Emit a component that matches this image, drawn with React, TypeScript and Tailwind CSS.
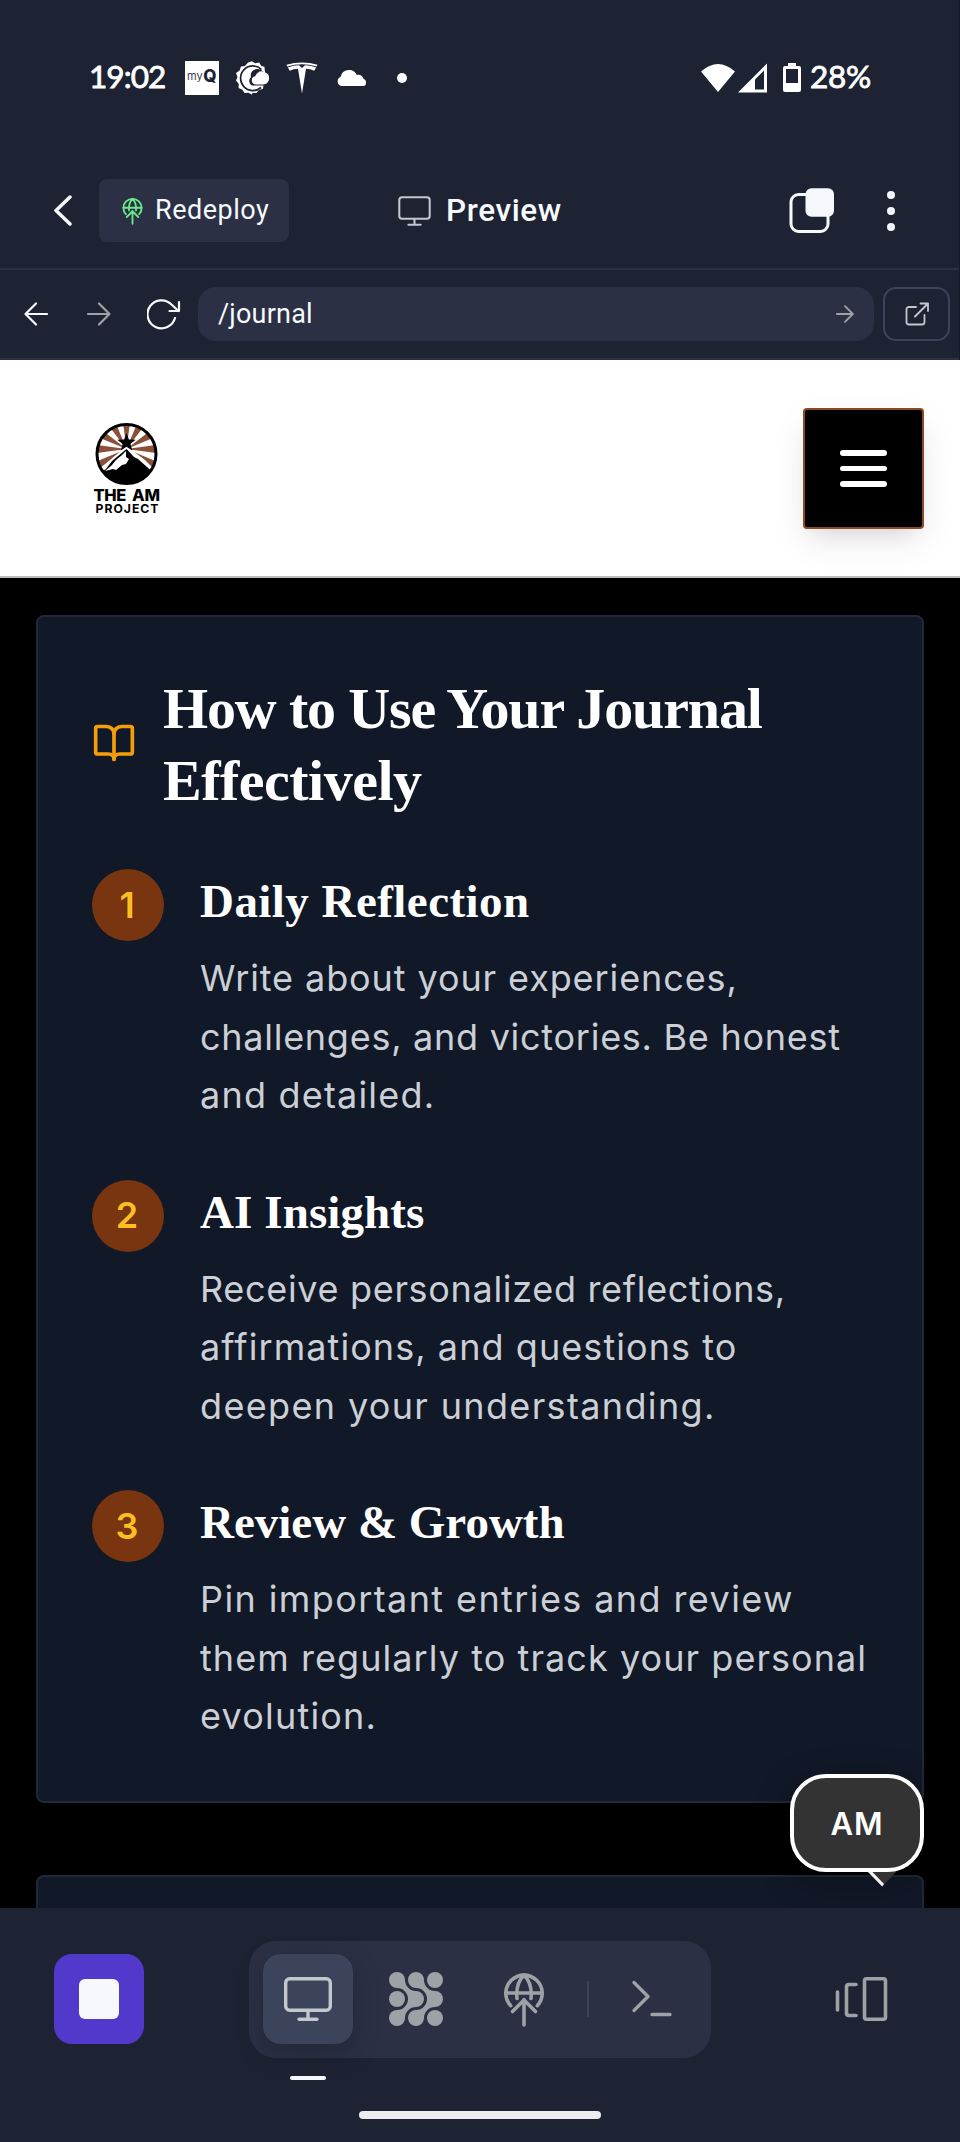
import type { ReactNode } from "react";
import { BookOpen } from "lucide-react";

type IconProps = { box: string; className: string; children: ReactNode };

function Icon({ box, className, children }: IconProps) {
  return (
    <svg
      viewBox={box}
      className={`shrink-0 ${className}`}
      fill="none"
      stroke="currentColor"
      strokeLinecap="round"
      strokeLinejoin="round"
      aria-hidden="true"
    >
      {children}
    </svg>
  );
}

function MonitorIcon({ className, stroke }: { className: string; stroke: number }) {
  return (
    <Icon box="0 0 48 44" className={className}>
      <g strokeWidth={stroke}>
        <rect x="1.7" y="1.7" width="44.6" height="31.6" rx="4" />
        <path d="M24 33.500v8M15 42.200h18" />
      </g>
    </Icon>
  );
}

function DeployIcon({ className, stroke }: { className: string; stroke: number }) {
  return (
    <Icon box="503 1971 42 55" className={className}>
      <g strokeWidth={stroke}>
        <path d="M510.700 2004.700A18.200 18.200 0 1 1 537.300 2004.700" />
        <path d="M506 1992h36M524 1974c-5.500 5.500-8 14-7 23.500M524 1974c5.500 5.500 8 14 7 23.500" />
        <path d="M524 2024v-25.500M512.500 2010.500l11.500-11.500 11.500 11.500" />
      </g>
    </Icon>
  );
}

function ArrowIcon({ className, stroke, flip }: { className: string; stroke: number; flip?: boolean }) {
  return (
    <Icon box="0 0 24 24" className={className}>
      <path strokeWidth={stroke} d={flip ? "M23 12H1.500M12 1.500L1.500 12 12 22.500" : "M1 12h21.500M12 1.500L22.500 12 12 22.500"} />
    </Icon>
  );
}

function StatusBar() {
  return (
    <div className="flex h-[155px] items-center pl-[89px] text-white">
      <span className="-mt-[2px] w-[96px] font-['Lato',sans-serif] text-[31.5px] tracking-[-0.9px] [-webkit-text-stroke:0.8px_white]">19:02</span>
      <svg viewBox="0 0 34 34" className="h-[34px] w-[34px] shrink-0">
        <rect width="34" height="34" fill="#fff" />
        <text fontFamily="Inter, sans-serif" fill="#3a4150">
          <tspan x="2" y="18.500" fontSize="11">my</tspan>
          <tspan x="18.300" y="20.800" fontSize="17" fontWeight="800" fill="#1d2333">Q</tspan>
        </text>
      </svg>
      <svg viewBox="0 0 34 34" className="ml-4 h-[34px] w-[34px] shrink-0">
        <path
          d="M17 .3l3.200 2 4-.9 2.200 3.500 3 .8.400 3.800L31 17l1 3-3.500 4-.5 3.800-4 1.300-2.500 3-4-.4L17 33.700l-3.500-2-4 .4-2.200-3.300-3.800-1.800.3-4L1 19.500 2.500 16 1 12l3.600-2.400L6 5.500l4-.6 3-3.400z"
          fill="#fff"
        />
        <path d="M26.500 8.500A12.300 12.300 0 1 0 26 26.500" fill="none" stroke="#1d2333" strokeWidth="1.700" />
        <path d="M22 8c-5 .5-7 4-6 8-3 3-2 7 1 8.500h11.500a6 6 0 0 0 1-12c-1.500-3-4-4.500-7.500-4.500z" fill="#1d2333" />
        <path d="M20.500 23.500a4.200 4.200 0 0 1-.3-8.300c1.500-4.200 6-6.500 9.500-3.900 4 1.300 5.500 5 4 8.200-1 2.500-3 4-5.500 4z" fill="#fff" />
      </svg>
      <svg viewBox="0 0 32 32" className="ml-[17px] h-8 w-8 shrink-0">
        <path d="M.5 2.800Q16-2 31.500 2.800l-.7 1.700Q16 .2 1.200 4.500z" fill="#fff" />
        <path d="M1.800 5.400Q7.500 3.300 13 3.300l3 2.800 3-2.800q5.500 0 11.200 2.100l-2 3.400q-3.800-1.900-8.200-2.100L16 31.500 12 6.700q-4.400.2-8.200 2.100z" fill="#fff" />
      </svg>
      <svg viewBox="336 68 32 18" className="ml-[18px] h-[18px] w-8 shrink-0">
        <path d="M341 85a5 5 0 0 1-.3-9.300 8.500 8.500 0 0 1 16-1.900 6 6 0 0 1 6.800 3.900A4 4 0 0 1 364 85z" fill="#fff" />
      </svg>
      <span className="ml-[29px] h-[10px] w-[10px] rounded-full bg-white" />
      <div className="ml-auto flex items-center pr-[88px]">
        <svg viewBox="701 62 102 30" className="h-[30px] w-[102px]">
          <path d="M701 70.500Q718 55.500 735 70.500L718 91z" fill="#fff" />
          <path d="M738 91.500L767 62.500v29z" fill="#fff" />
          <path d="M755 78.500l9-9v19h-9z" fill="#1d2333" />
          <path d="M788 62h8v3h3a2 2 0 0 1 2 2v22a2 2 0 0 1-2 2h-14a2 2 0 0 1-2-2V67a2 2 0 0 1 2-2h3z" fill="#fff" />
          <path d="M786 68h12v14h-12z" fill="#1d2333" />
        </svg>
        <span className="-mt-[2px] ml-[7px] font-['Lato',sans-serif] text-[31.5px] tracking-[-0.3px] [-webkit-text-stroke:0.8px_white]">28%</span>
      </div>
    </div>
  );
}

function TopBar() {
  return (
    <div className="flex h-[115px] items-start border-b-2 border-[#2b3044] pt-6 text-[#f5f9fc]">
      <Icon box="0 0 18 31" className="ml-[54px] mt-4 h-[31px] w-[18px]">
        <path strokeWidth="3.500" d="M16 2L2 15.500 16 29" />
      </Icon>
      <div className="ml-[27px] flex h-[63px] w-[190px] items-center rounded-lg bg-[#2b3044] pl-[23px] font-['Roboto',sans-serif] text-[27px] tracking-[0.5px]">
        <DeployIcon className="h-[28px] w-[21px] text-[#6bea8b]" stroke={3.6} />
        <span className="ml-3">Redeploy</span>
      </div>
      <div className="ml-[109px] flex h-[63px] items-center">
        <MonitorIcon className="h-[30px] w-[33px] text-[#c2c8cc]" stroke={3} />
        <span className="ml-[15px] font-['Roboto',sans-serif] text-[31.5px] font-medium tracking-[0.6px]">Preview</span>
      </div>
      <div className="ml-auto flex h-[63px] items-center pr-[64px]">
        <Icon box="789 188 46 45" className="h-[45px] w-[46px]">
          <rect x="791" y="194.500" width="37" height="37" rx="7.500" strokeWidth="3" />
          <rect x="805.500" y="188.300" width="28.500" height="28.500" rx="6" fill="currentColor" stroke="none" />
        </Icon>
        <Icon box="0 0 8 40" className="ml-[52px] h-10 w-2">
          <g fill="currentColor" stroke="none">
            <circle cx="4" cy="4" r="4" />
            <circle cx="4" cy="20" r="4" />
            <circle cx="4" cy="36" r="4" />
          </g>
        </Icon>
      </div>
    </div>
  );
}

function AddressBar() {
  return (
    <div className="flex h-[90px] items-center border-b-2 border-[#2b3044] pl-6 pr-[9px] text-[#f5f9fc]">
      <ArrowIcon className="h-6 w-6" stroke={2.2} flip />
      <ArrowIcon className="ml-[39px] h-6 w-6 text-[#9da2a6]" stroke={2.2} />
      <Icon box="147 298 34 32" className="ml-9 h-8 w-[34px]">
        <path strokeWidth="2.200" d="M175 318a14 14 0 1 1-3.500-13.500l7 6.500M179 302v9h-9.500" />
      </Icon>
      <div className="ml-[17px] flex h-[54px] w-[676px] items-center justify-between rounded-[18px] bg-[#2b3044] pl-5 pr-[20px]">
        <span className="font-['Roboto',sans-serif] text-[27px] tracking-[0.2px]">/journal</span>
        <ArrowIcon className="h-[18px] w-[18px] text-[#9da2a6]" stroke={2.4} />
      </div>
      <div className="ml-[9px] flex h-[54px] w-[67px] items-center justify-center rounded-[13px] border-2 border-[#3c445c]">
        <Icon box="0 0 24 24" className="h-6 w-6 text-[#c2c8cc]">
          <path strokeWidth="1.800" d="M11 5H4a2.500 2.500 0 0 0-2.500 2.500V20A2.500 2.500 0 0 0 4 22.500h13a2.500 2.500 0 0 0 2.500-2.500v-7M10 14.500L23 1.500M15.500 1.500H23V9" />
        </Icon>
      </div>
    </div>
  );
}

function Logo() {
  const rays = Array.from({ length: 12 }, (_, i) => {
    const a = ((i * 30 - 7.5) * Math.PI) / 180;
    const b = ((i * 30 + 7.5) * Math.PI) / 180;
    return `M33.500 27L${33.5 + 45 * Math.cos(a)} ${27 + 45 * Math.sin(a)}L${33.5 + 45 * Math.cos(b)} ${27 + 45 * Math.sin(b)}Z`;
  }).join("");
  return (
    <svg viewBox="0 0 67 94" className="h-[94px] w-[67px]">
      <clipPath id="disc">
        <circle cx="33.500" cy="32" r="29.500" />
      </clipPath>
      <circle cx="33.500" cy="32" r="29.500" fill="#fff" />
      <g clipPath="url(#disc)">
        <path d={rays} fill="#8a5038" />
        <path d="M2 50L17 38 33.500 24 52 38 66 52V66H0z" fill="#fff" />
        <path d="M2 54L13 47 19 39l14.500-12L41 35l4 2 19 17v12H2z" fill="#000" />
        <path d="M33 29l-4 4-6 5-4 5-7 6 8-2 3 1 6-5 4-1 3-5-3-2z" fill="#fff" />
      </g>
      <path d="M33.500 11l2.400 6.500 6.800.3-5.300 4.200 1.900 6.600-5.800-3.800-5.800 3.800 1.900-6.600-5.300-4.200 6.800-.3z" fill="#000" />
      <circle cx="33.500" cy="32" r="29.500" fill="none" stroke="#000" strokeWidth="3" />
      <text fontFamily="Inter, sans-serif" fill="#000">
        <tspan x="0.500" y="79" fontSize="16.500" fontWeight="800" letterSpacing="-0.400" wordSpacing="3">THE AM</tspan>
        <tspan x="2.500" y="91" fontSize="12.200" fontWeight="700" letterSpacing="1">PROJECT</tspan>
      </text>
    </svg>
  );
}

function SiteHeader() {
  return (
    <header className="flex h-[218px] items-start justify-between border-b-2 border-[#b9bcbc] bg-white pl-[93px] pr-9">
      <div className="pt-[62px]">
        <Logo />
      </div>
      <div className="mt-12 flex h-[121px] w-[121px] flex-col items-center justify-center gap-[10.200px] rounded border-2 border-[#8b4a22] bg-black shadow-[0_14px_36px_rgba(0,0,0,0.07),0_12px_22px_-10px_rgba(0,0,0,0.12)]">
        <span className="h-[5.600px] w-[47px] rounded-full bg-white" />
        <span className="h-[5.600px] w-[47px] rounded-full bg-white" />
        <span className="h-[5.600px] w-[47px] rounded-full bg-white" />
      </div>
    </header>
  );
}

type Line = { text: string; spacing: string };
type Step = { title: Line; lines: Line[] };

const steps: Step[] = [
  {
    title: { text: "Daily Reflection", spacing: "tracking-[0.45px]" },
    lines: [
      { text: "Write about your experiences,", spacing: "tracking-[0.9px]" },
      { text: "challenges, and victories. Be honest", spacing: "tracking-[0.73px]" },
      { text: "and detailed.", spacing: "tracking-[1.2px]" },
    ],
  },
  {
    title: { text: "AI Insights", spacing: "tracking-[0.1px]" },
    lines: [
      { text: "Receive personalized reflections,", spacing: "tracking-[0.68px]" },
      { text: "affirmations, and questions to", spacing: "tracking-[1.07px]" },
      { text: "deepen your understanding.", spacing: "tracking-[1.35px]" },
    ],
  },
  {
    title: { text: "Review & Growth", spacing: "tracking-[0px]" },
    lines: [
      { text: "Pin important entries and review", spacing: "tracking-[1.4px]" },
      { text: "them regularly to track your personal", spacing: "tracking-[1.06px]" },
      { text: "evolution.", spacing: "tracking-[1.2px]" },
    ],
  },
];

function GuideCard() {
  return (
    <section className="h-[1188px] rounded-lg border-2 border-[#1f2937] bg-[#111827] px-[54px] pt-[54px] text-white">
      <div className="flex items-center">
        <BookOpen className="h-11 w-11 shrink-0 text-[#f59e0b]" strokeWidth={2} />
        <h2 className="-mb-[2px] ml-[27px] whitespace-nowrap pt-[2px] font-['Liberation_Serif',serif] text-[58px] font-bold leading-[72px]">
          <span className="block tracking-[-1.15px]">How to Use Your Journal</span>
          <span className="block tracking-[-0.5px]">Effectively</span>
        </h2>
      </div>
      <ol className="mt-[54px] flex flex-col gap-[54px]">
        {steps.map((step, i) => (
          <li key={step.title.text} className="flex h-[256.500px] gap-9">
            <span className="flex h-[72px] w-[72px] shrink-0 items-center justify-center rounded-full bg-[#78350f] pb-px pr-[2px] font-['Inter',sans-serif] text-[36px] font-semibold text-[#fbbf24]">
              {i + 1}
            </span>
            <div className="whitespace-nowrap">
              <h3 className={`mb-4 font-['Liberation_Serif',serif] text-[47px] font-bold leading-[64px] ${step.title.spacing}`}>
                {step.title.text}
              </h3>
              <p className="font-['Inter',sans-serif] text-[36px] leading-[58.500px] text-[#cbcfd6]">
                {step.lines.map((line) => (
                  <span key={line.text} className={`block ${line.spacing}`}>
                    {line.text}
                  </span>
                ))}
              </p>
            </div>
          </li>
        ))}
      </ol>
    </section>
  );
}

function ChatBubble() {
  return (
    <div className="absolute right-9 top-[1196px] h-[98px] w-[134px]">
      <div className="flex h-[98px] items-center justify-center rounded-[36px] border-4 border-white bg-[#333] pt-[2px] font-['Inter',sans-serif] text-[31px] font-semibold tracking-[1px] text-white shadow-[0_9px_36px_rgba(0,0,0,0.3)]">
        AM
      </div>
      <svg viewBox="0 0 30 16" className="absolute left-[77px] top-[98px] h-4 w-[30px]">
        <path d="M1 0h28L15.500 14.500z" fill="#333" />
        <path d="M1 0h4.500L17 12l-1.800 2.500z" fill="#f4f4f4" />
      </svg>
    </div>
  );
}

function DotsIcon() {
  const centers = [8, 27, 46];
  return (
    <svg viewBox="0 0 54 54" className="h-[54px] w-[54px] shrink-0 text-[#9da2a6]" fill="currentColor">
      {centers.map((x) => centers.map((y) => <circle key={`${x}-${y}`} cx={x} cy={y} r="8" />))}
      <path d="M8 16A11 11 0 0 1 19 27L27 19A11 11 0 0 1 16 8ZM27 16A11 11 0 0 1 38 27L46 19A11 11 0 0 1 35 8Z" />
      <path d="M8 38A11 11 0 0 0 19 27L27 35A11 11 0 0 0 16 46ZM27 38A11 11 0 0 0 38 27L46 35A11 11 0 0 0 35 46Z" />
    </svg>
  );
}

function BottomBar() {
  return (
    <nav className="h-[234px] bg-[#1d2333] pt-[33px]">
      <div className="flex h-[117px] items-center pl-[54px] pr-[72px] text-[#9da2a6]">
        <div className="mb-px flex h-[90px] w-[90px] items-center justify-center rounded-[18px] bg-[#5338cc]">
          <span className="h-10 w-10 rounded-md bg-[#f5f9fc]" />
        </div>
        <div className="ml-[105px] flex h-[117px] w-[462px] items-center rounded-[27px] bg-[#2b3044] pb-px pl-[14px]">
          <div className="flex h-[90px] w-[90px] items-center justify-center rounded-[18px] bg-[#3c445c] shadow-[0_8px_24px_rgba(20,24,38,0.35)]">
            <MonitorIcon className="h-11 w-12 text-[#c2c8cc]" stroke={3.4} />
          </div>
          <div className="ml-9">
            <DotsIcon />
          </div>
          <DeployIcon className="ml-[60px] h-[55px] w-[42px]" stroke={3.6} />
          <span className="ml-[42px] h-9 w-[2px] bg-[#3c445c]" />
          <Icon box="631 1980 42 38" className="ml-[42px] h-[38px] w-[42px]">
            <path strokeWidth="3.400" d="M634 1982.500l14 14-14 14M652 2014.500h18" />
          </Icon>
        </div>
        <Icon box="835 1976 53 46" className="mb-px ml-auto h-[46px] w-[53px]">
          <path strokeWidth="3.600" d="M837.500 1992v18M856 1984.500h-7q-2.500 0-2.500 2.500v26q0 2.500 2.500 2.500h7" />
          <rect x="864.500" y="1978.800" width="21" height="40.500" rx="2" strokeWidth="3.600" />
        </Icon>
      </div>
      <div className="ml-[290px] mt-[18px] h-1 w-9 rounded-full bg-[#f5f9fc]" />
      <div className="ml-[359px] mt-[31px] h-2 w-[242px] rounded-full bg-[#ededf0]" />
    </nav>
  );
}

export default function App() {
  return (
    <div className="h-[2142px] w-[960px] overflow-hidden bg-black">
      <div className="border-r border-[#141a28] bg-[#1d2333]">
        <StatusBar />
        <TopBar />
        <AddressBar />
      </div>
      <SiteHeader />
      <main className="relative h-[1330px] overflow-hidden bg-black px-9 pt-[37px]">
        <GuideCard />
        <section className="mt-[72px] h-[60px] rounded-t-lg border-2 border-b-0 border-[#1f2937] bg-[#111827]" />
        <ChatBubble />
      </main>
      <BottomBar />
    </div>
  );
}
